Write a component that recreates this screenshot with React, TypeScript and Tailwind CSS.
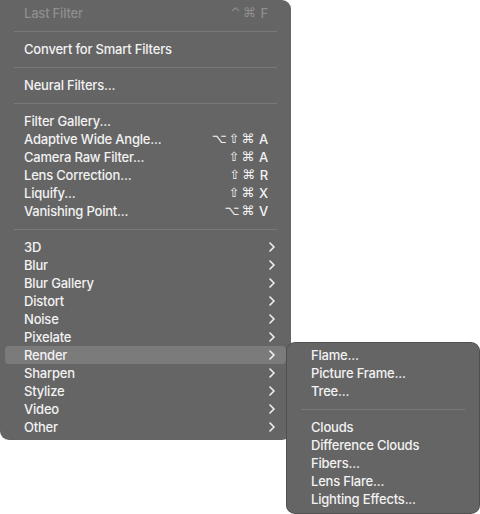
import { Fragment } from 'react';

type Item =
  | { type: 'sep' }
  | { type: 'item'; label: string; shortcut?: string; disabled?: boolean; submenu?: boolean; active?: boolean };

const mainItems: Item[] = [
  { type: 'item', label: 'Last Filter', shortcut: '^⌘F', disabled: true },
  { type: 'sep' },
  { type: 'item', label: 'Convert for Smart Filters' },
  { type: 'sep' },
  { type: 'item', label: 'Neural Filters...' },
  { type: 'sep' },
  { type: 'item', label: 'Filter Gallery...' },
  { type: 'item', label: 'Adaptive Wide Angle...', shortcut: '⌥⇧⌘A' },
  { type: 'item', label: 'Camera Raw Filter...', shortcut: '⇧⌘A' },
  { type: 'item', label: 'Lens Correction...', shortcut: '⇧⌘R' },
  { type: 'item', label: 'Liquify...', shortcut: '⇧⌘X' },
  { type: 'item', label: 'Vanishing Point...', shortcut: '⌥⌘V' },
  { type: 'sep' },
  { type: 'item', label: '3D', submenu: true },
  { type: 'item', label: 'Blur', submenu: true },
  { type: 'item', label: 'Blur Gallery', submenu: true },
  { type: 'item', label: 'Distort', submenu: true },
  { type: 'item', label: 'Noise', submenu: true },
  { type: 'item', label: 'Pixelate', submenu: true },
  { type: 'item', label: 'Render', submenu: true, active: true },
  { type: 'item', label: 'Sharpen', submenu: true },
  { type: 'item', label: 'Stylize', submenu: true },
  { type: 'item', label: 'Video', submenu: true },
  { type: 'item', label: 'Other', submenu: true },
];

const renderItems: Item[] = [
  { type: 'item', label: 'Flame...' },
  { type: 'item', label: 'Picture Frame...' },
  { type: 'item', label: 'Tree...' },
  { type: 'sep' },
  { type: 'item', label: 'Clouds' },
  { type: 'item', label: 'Difference Clouds' },
  { type: 'item', label: 'Fibers...' },
  { type: 'item', label: 'Lens Flare...' },
  { type: 'item', label: 'Lighting Effects...' },
];

function Chevron() {
  return (
    <svg width="6" height="10" viewBox="0 0 6 10" fill="none">
      <path d="M1 1l4 4-4 4" stroke="#f2f2f2" strokeWidth="1.6" strokeLinecap="round" strokeLinejoin="round" />
    </svg>
  );
}

function Shortcut({ keys, disabled }: { keys: string; disabled?: boolean }) {
  return (
    <span className={`flex items-center gap-[2px] ${disabled ? 'text-[#8e8e8e]' : 'text-[#f2f2f2]'}`}>
      {keys.split('').map((k, i) =>
        /[A-Z]/.test(k) ? (
          <span key={i} className="ml-[3px]">
            {k}
          </span>
        ) : (
          <span key={i} className="text-[13px]" style={{ fontFamily: '"DejaVu Sans", sans-serif' }}>
            {k}
          </span>
        )
      )}
    </span>
  );
}

function MenuRows({ items }: { items: Item[] }) {
  return (
    <>
      {items.map((it, i) => (
        <Fragment key={i}>
          {it.type === 'sep' ? (
            <div className="h-[18px] flex items-center px-[14px]">
              <div className="h-px w-full bg-[#797979]" />
            </div>
          ) : (
            <div
              className={`h-[18px] mx-[5px] pl-[19px] flex items-center justify-between rounded-[4px] ${
                it.active ? 'bg-[#7b7b7b]' : ''
              } ${it.submenu ? 'pr-[11px]' : 'pr-[18px]'}`}
            >
              <span className={it.disabled ? 'text-[#8e8e8e]' : 'text-[#f2f2f2]'}>{it.label}</span>
              {it.shortcut && <Shortcut keys={it.shortcut} disabled={it.disabled} />}
              {it.submenu && <Chevron />}
            </div>
          )}
        </Fragment>
      ))}
    </>
  );
}

export default function App() {
  return (
    <div
      className="w-[480px] h-[514px] bg-white flex items-start overflow-hidden text-[13px] leading-[18px] font-medium tracking-[-0.2px]"
      style={{ fontFamily: 'Inter, "Liberation Sans", sans-serif' }}
    >
      <div className="w-[291px] bg-[#656565] rounded-tr-[9px] rounded-b-[9px] py-[4px] shrink-0">
        <MenuRows items={mainItems} />
      </div>
      <div className="mt-[342px] -ml-[5px] w-[194px] bg-[#656565] rounded-[9px] border border-black/20 pt-[3px] pb-[5px] shrink-0">
        <MenuRows items={renderItems} />
      </div>
    </div>
  );
}
